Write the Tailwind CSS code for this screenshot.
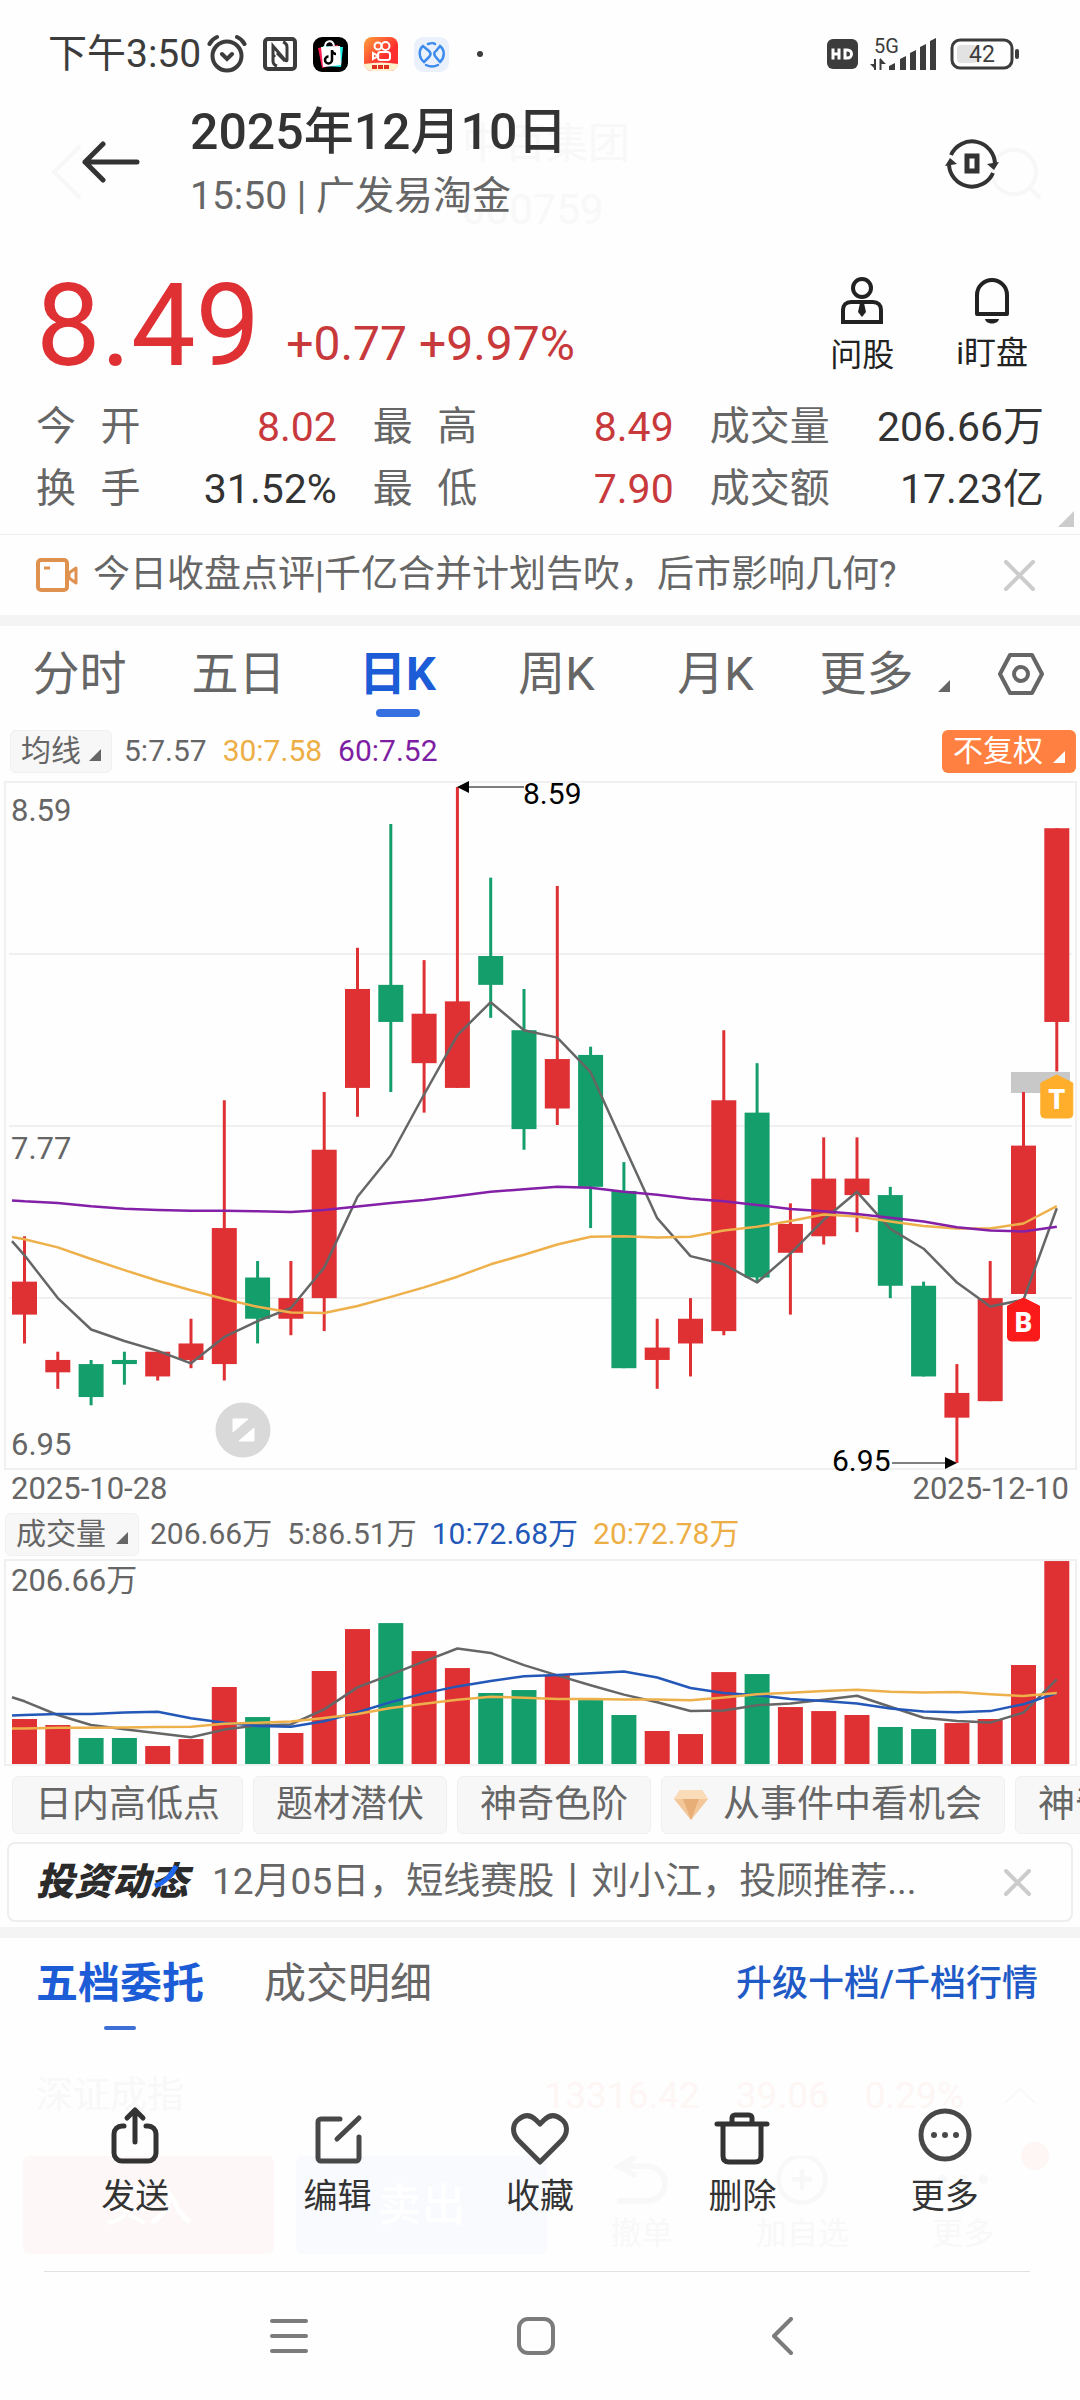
<!DOCTYPE html>
<html lang="zh-CN">

<head>
    <meta charset="UTF-8">
    <meta name="viewport" content="width=device-width, initial-scale=1">
    <title>8.49 日K</title>
    <script src="https://cdn.jsdelivr.net/npm/@tailwindcss/browser@4"></script>
</head>

<body class="bg-[#fefefe] text-[#333] font-[Roboto,'Noto_Sans_CJK_SC',sans-serif]">
    <!-- status bar -->
    <div class="flex items-center h-[108px] pl-12 pr-[60px] text-[#3c3c3c]">
        <span class="text-[39px] leading-[48px]">下午3:50</span>
        <svg class="w-10 h-10 ml-[6px]" viewBox="0 0 40 40" fill="none" stroke="currentColor" stroke-width="4" stroke-linecap="round">
            <circle cx="20" cy="22" r="14.5" />
            <path d="M2.500 10C4 7 6.500 4.500 10 3M37.500 10C36 7 33.500 4.500 30 3M15 20l5 5 5-5" />
        </svg>
        <svg class="w-[34px] h-[34px] ml-4" viewBox="0 0 34 34" fill="none" stroke="currentColor">
            <rect x="2" y="2" width="30" height="30" rx="3" stroke-width="4" />
            <path d="M14 29c-3-1-4-2-4-5V9l12 14c1 1 2 1 2 0V10M20 5c3 1 4 2 4 5M12 20l-2-2M14 16l8 8" stroke-width="3" />
        </svg>
        <svg class="w-[35px] h-[35px] ml-4" viewBox="0 0 35 35">
            <rect width="35" height="35" rx="9" fill="#000" />
            <path d="M5 11l20-3 4 18-20 5z" fill="#ff1a50" />
            <path d="M10 9l20 1-2 20-18-1z" fill="#19f0e6" />
            <path d="M8 10l19-1 1 19-18 2z" fill="#fff" />
            <path d="M12 10c0-7 8-8 9-1" fill="none" stroke="#fff" stroke-width="2" />
            <path d="M19 13v10a3.500 3.500 0 1 1-3.500-3.500M19 14c1 2 2 3 4 3" fill="none" stroke="#000" stroke-width="2.500" />
        </svg>
        <svg class="w-[34px] h-[34px] ml-4" viewBox="0 0 34 34">
            <defs>
                <linearGradient id="ks" x1="0" y1="0" x2="1" y2="1">
                    <stop offset="0" stop-color="#ffa03a" />
                    <stop offset="0.6" stop-color="#ff2e2e" />
                </linearGradient>
            </defs>
            <rect width="34" height="34" rx="8" fill="url(#ks)" />
            <g fill="none" stroke="#fff" stroke-width="2">
                <circle cx="14" cy="9" r="3.500" />
                <circle cx="21.500" cy="9" r="4" />
                <rect x="14" y="15" width="12" height="8" rx="2.500" />
                <path d="M14 19l-5-3v6z" />
            </g>
            <path d="M0 27q17-3 34 0a8 7 0 0 1-8 7H8a8 7 0 0 1-8-7z" fill="#fff0cc" />
            <path d="M8 30h17" stroke="#e03020" stroke-width="4" stroke-dasharray="5 1" />
        </svg>
        <svg class="w-[35px] h-[35px] ml-4" viewBox="0 0 35 35">
            <rect width="35" height="35" rx="9" fill="#eaf1fb" />
            <g fill="none" stroke="#3d8bec" stroke-width="2.500" stroke-linecap="round">
                <path d="M10 25C5 21 4 13 9 9l6 5c2 2 2 4 0 6z" />
                <path d="M14 7c3-1 6-1 7 0M26 9c5 4 5 11 0 16l-5-6c-1-2-1-4 1-5z" />
                <path d="M12 28c4 2 8 2 12 0" />
            </g>
        </svg>
        <span class="w-[6px] h-[6px] ml-7 rounded-full bg-[#3c3c3c]"></span>
        <svg class="w-[31px] h-[30px] ml-auto" viewBox="0 0 31 30">
            <rect width="31" height="30" rx="6" fill="#3c3c3c" />
            <path d="M6 9.500v11M6 15h6M12 9.500v11M18 11v8h2.500a4 4 0 0 0 0-8z" fill="none" stroke="#fff" stroke-width="3" />
        </svg>
        <svg class="w-[68px] h-[36px] ml-3" viewBox="0 0 68 36">
            <text x="4" y="17" font-size="20" fill="#3c3c3c">5G</text>
            <path d="M0 28l6 6V28zM16 28l-6-6v6z" fill="#3c3c3c" />
            <path d="M5 23v11M10.500 23v11" stroke="#3c3c3c" stroke-width="2" />
            <path d="M19 34v-4l6-3v7zM30 34V23l6-3v14zM40 34V17l6-3v20zM50 34V11l6-3v26zM60 34V5l6-3v32z" fill="#3c3c3c" />
        </svg>
        <svg class="w-[70px] h-[32px] ml-3" viewBox="0 0 70 32">
            <rect x="2" y="2" width="60" height="28" rx="8" fill="none" stroke="#3c3c3c" stroke-width="3" />
            <rect x="7" y="7" width="20" height="18" rx="4" fill="#e2e2e2" />
            <rect x="65" y="11" width="4" height="10" rx="2" fill="#3c3c3c" />
            <text x="32" y="24" font-size="23" text-anchor="middle" fill="#3c3c3c">42</text>
        </svg>
    </div>

    <!-- title bar, the page behind it shows through faintly -->
    <header class="relative flex items-center h-[112px] pl-[82px] pr-[81px]">
        <div class="absolute left-[462px] top-2 text-[#f8f8f8] whitespace-nowrap" aria-hidden="true">
            <p class="text-[42px] leading-[56px]">中百集团</p>
            <p class="text-[42px] leading-[76px]">000759</p>
        </div>
        <svg class="absolute left-[50px] top-[36px] w-8 h-14" viewBox="0 0 32 56" fill="none" stroke="#f7f7f7" stroke-width="4"><path d="M30 2L4 28l26 26" /></svg>
        <svg class="absolute right-[38px] top-[38px] w-14 h-14" viewBox="0 0 56 56" fill="none" stroke="#f7f7f7" stroke-width="4"><circle cx="28" cy="26" r="22" /><path d="M44 42l10 10" /></svg>
        <button class="relative mb-1" type="button" aria-label="返回">
            <svg class="w-[58px] h-[42px]" viewBox="0 0 58 42" fill="none" stroke="#333" stroke-width="5" stroke-linecap="round" stroke-linejoin="round"><path d="M55 21H3M21 3L3 21l18 18" /></svg>
        </button>
        <div class="relative ml-[50px]">
            <h1 class="text-[50px] leading-[64px] font-medium">2025年12月10日</h1>
            <p class="text-[39px] leading-[64px] text-[#666]">15:50 | 广发易淘金</p>
        </div>
        <button class="relative ml-auto" type="button" aria-label="识别">
            <svg class="w-[54px] h-[54px]" viewBox="0 0 54 54" fill="none" stroke="#333" stroke-width="4">
                <path d="M6 18A23 23 0 0 1 50 27" />
                <path d="M48 36A23 23 0 0 1 4 27" />
                <path d="M54 25l-5 8-7-6zM0 29l5-8 7 6z" fill="#333" stroke="none" />
                <rect x="22" y="19" width="10" height="15" stroke-width="5" />
            </svg>
        </button>
    </header>

    <!-- price -->
    <section class="flex h-44 px-9">
        <div class="flex items-end h-[162px] text-[#df3034]">
            <span class="text-[115px] leading-[112px]">8.49</span>
            <span class="ml-[26px] text-[48px] leading-[76px] text-[#c8393c]">+0.77 +9.97%</span>
        </div>
        <div class="flex ml-auto pt-[54px] gap-[62px] pr-4 text-[#222]">
            <button class="flex flex-col items-center" type="button">
                <svg class="w-[52px] h-[56px]" viewBox="0 0 52 56" fill="none" stroke="currentColor" stroke-width="4">
                    <circle cx="26" cy="14" r="9" />
                    <path d="M7 48V36c0-5 3-8 8-8h22c5 0 8 3 8 8v12z" />
                    <path d="M24 29h4l2 9-4 5-4-5z" fill="currentColor" stroke="none" />
                </svg>
                <span class="text-[32px] leading-[50px]">问股</span>
            </button>
            <button class="flex flex-col items-center" type="button">
                <svg class="w-[52px] h-[52px]" viewBox="0 0 52 52" fill="none" stroke="currentColor" stroke-width="4">
                    <path d="M11 40V21a15 15 0 0 1 30 0v19z" stroke-linejoin="round" />
                    <path d="M19 45h14c-1 6-13 6-14 0z" fill="currentColor" stroke="none" />
                </svg>
                <span class="text-[32px] leading-[54px]">i盯盘</span>
            </button>
        </div>
    </section>
    <dl class="relative grid grid-cols-[9fr_9fr_10fr] gap-x-9 px-9 h-[138px] content-start text-[40px] leading-[62px] whitespace-nowrap">
        <div class="flex justify-between"><dt class="text-[#666]">今&ensp;&hairsp;开</dt><dd class="text-[41px] text-[#c8393c]">8.02</dd></div>
        <div class="flex justify-between"><dt class="text-[#666]">最&ensp;&hairsp;高</dt><dd class="text-[41px] text-[#c8393c]">8.49</dd></div>
        <div class="flex justify-between"><dt class="text-[#666]">成交量</dt><dd class="text-[41px]">206.66万</dd></div>
        <div class="flex justify-between"><dt class="text-[#666]">换&ensp;&hairsp;手</dt><dd class="text-[41px]">31.52%</dd></div>
        <div class="flex justify-between"><dt class="text-[#666]">最&ensp;&hairsp;低</dt><dd class="text-[41px] text-[#c8393c]">7.90</dd></div>
        <div class="flex justify-between"><dt class="text-[#666]">成交额</dt><dd class="text-[41px]">17.23亿</dd></div>
        <svg class="absolute right-[6px] bottom-[7px] w-4 h-4" viewBox="0 0 16 16"><path d="M16 0v16H0z" fill="#ccc" /></svg>
    </dl>

    <div class="flex items-center h-[81px] px-9 border-t border-[#eee]">
        <svg class="w-[42px] h-[34px]" viewBox="0 0 42 34" fill="none" stroke="#df9250" stroke-width="4" stroke-linejoin="round">
            <rect x="2" y="2" width="29" height="30" rx="3" />
            <path d="M33 15l7-5v15l-7-5zM8 10h6" stroke-width="3" />
        </svg>
        <a class="ml-[15px] text-[37px] leading-[48px] text-[#666]" href="#">今日收盘点评|千亿合并计划告吹，后市影响几何?</a>
        <button class="ml-auto mr-[9px]" type="button" aria-label="关闭">
            <svg class="w-[31px] h-[31px]" viewBox="0 0 31 31" stroke="#ccc" stroke-width="4" stroke-linecap="round"><path d="M2 2l27 27M29 2L2 29" /></svg>
        </button>
    </div>
    <div class="h-[11px] bg-[#f4f4f4]"></div>

    <!-- period tabs -->
    <nav class="grid grid-cols-[159fr_159fr_159fr_159fr_159fr_159fr_126fr] h-24 text-[47px] leading-[96px] text-[#666]">
        <a class="text-center" href="#">分时</a>
        <a class="text-center" href="#">五日</a>
        <a class="relative text-center font-bold text-[#1c5cd6]" href="#" aria-current="page">日K
            <span class="absolute inset-x-0 bottom-[5px] mx-auto w-11 h-2 rounded bg-[#3670e0]"></span>
        </a>
        <a class="text-center" href="#">周K</a>
        <a class="text-center" href="#">月K</a>
        <button class="flex items-center justify-center gap-6 pl-5" type="button">更多
            <svg class="w-3 h-3 mt-6" viewBox="0 0 12 12"><path d="M12 0v12H0z" fill="#666" /></svg>
        </button>
        <button class="flex items-center justify-center pl-2" type="button" aria-label="设置">
            <svg class="w-[46px] h-[42px]" viewBox="0 0 46 42" fill="none" stroke="#666" stroke-width="4" stroke-linejoin="round">
                <path d="M12 2h22l10 19-10 19H12L2 21z" />
                <circle cx="23" cy="21" r="7" />
            </svg>
        </button>
    </nav>

    <!-- price chart -->
    <div class="flex items-center h-[58px] pl-[10px] pr-1 gap-4 text-[30px] leading-[42px] text-[#666]">
        <button class="flex items-center gap-2 h-[43px] px-[10px] rounded-md border border-[#f0f0f0] bg-[#f7f7f7] -mr-1" type="button">均线
            <svg class="w-3 h-3 mt-2" viewBox="0 0 12 12"><path d="M12 0v12H0z" fill="#666" /></svg>
        </button>
        <span>5:7.57</span>
        <span class="text-[#ecae45]">30:7.58</span>
        <span class="text-[#7e1fa3]">60:7.52</span>
        <button class="flex items-center gap-[10px] h-[43px] px-[11px] rounded-md bg-[#ff8040] text-white ml-auto" type="button">不复权
            <svg class="w-3 h-3 mt-3" viewBox="0 0 12 12"><path d="M12 0v12H0z" fill="#fff" /></svg>
        </button>
    </div>
    <svg id="kline" class="block w-full" viewBox="0 0 1080 692"></svg>
    <div class="flex justify-between h-[38px] px-[11px] text-[31px] leading-[34px] text-[#666]">
        <span>2025-10-28</span>
        <span>2025-12-10</span>
    </div>

    <!-- volume chart -->
    <div class="flex items-center h-[48px] pl-[5px] gap-[15px] text-[30px] leading-[42px] text-[#666] whitespace-nowrap">
        <button class="flex items-center gap-[10px] h-[43px] px-[10px] rounded-md border border-[#f0f0f0] bg-[#f7f7f7] -mr-1" type="button">成交量
            <svg class="w-3 h-3 mt-2" viewBox="0 0 12 12"><path d="M12 0v12H0z" fill="#666" /></svg>
        </button>
        <span>206.66万</span>
        <span>5:86.51万</span>
        <span class="text-[#2458b8]">10:72.68万</span>
        <span class="text-[#ecae45]">20:72.78万</span>
    </div>
    <svg id="volume" class="block w-full" viewBox="0 0 1080 212"></svg>

    <div class="flex gap-[10px] pt-[6px] pl-3 overflow-hidden text-[37px] leading-[56px] text-[#666] whitespace-nowrap">
        <button class="shrink-0 px-[22px] rounded-md border border-[#f0f0f0] bg-[#f7f7f7]" type="button">日内高低点</button>
        <button class="shrink-0 px-[22px] rounded-md border border-[#f0f0f0] bg-[#f7f7f7]" type="button">题材潜伏</button>
        <button class="shrink-0 px-[22px] rounded-md border border-[#f0f0f0] bg-[#f7f7f7]" type="button">神奇色阶</button>
        <button class="flex shrink-0 items-center gap-[15px] pl-3 pr-[22px] rounded-md border border-[#f0f0f0] bg-[#f7f7f7]" type="button">
            <svg class="w-[34px] h-[32px]" viewBox="0 0 34 32">
                <path d="M6 1h22l6 9-17 21L0 10z" fill="#f3c79a" />
                <path d="M6 1h22l6 9H0z" fill="#fbdcb8" />
                <path d="M9 10h16l-8 21z" fill="#e8ae78" />
            </svg>从事件中看机会
        </button>
        <button class="shrink-0 px-[22px] rounded-md border border-[#f0f0f0] bg-[#f7f7f7]" type="button">神奇</button>
    </div>

    <div class="flex items-center h-20 mx-[7px] mt-2 pl-[27px] pr-10 rounded-lg border-2 border-[#eee]">
        <span class="relative text-[38px] leading-[48px] font-black italic text-[#2b2b2b]">投资动态
            <svg class="absolute right-[6px] top-[7px] w-[28px] h-[24px]" viewBox="0 0 28 24" fill="none" stroke="#2068f0" stroke-width="5"><path d="M22 1C17 10 12 17 1 21" /></svg>
        </span>
        <a class="ml-6 text-[37px] leading-[48px] text-[#666] whitespace-nowrap" href="#">12月05日，短线赛股丨刘小江，投顾推荐...</a>
        <button class="ml-auto" type="button" aria-label="关闭">
            <svg class="w-[27px] h-[27px]" viewBox="0 0 27 27" stroke="#ccc" stroke-width="4" stroke-linecap="round"><path d="M2 2l23 23M25 2L2 25" /></svg>
        </button>
    </div>
    <div class="h-[11px] mt-[5px] bg-[#f4f4f4]"></div>

    <div class="flex h-[92px] px-9 text-[42px] leading-[92px] text-[#666]">
        <a class="relative font-bold text-[#1c5cd6]" href="#" aria-current="page">五档委托
            <span class="absolute inset-x-0 bottom-0 mx-auto w-8 h-1 rounded-sm bg-[#3d6fd6]"></span>
        </a>
        <a class="ml-[60px]" href="#">成交明细</a>
        <a class="ml-auto mr-[6px] text-[36px] font-medium text-[#1f5ac6]" href="#">升级十档/千档行情</a>
    </div>

    <!-- action sheet over the faded trade bar -->
    <footer class="relative">
        <div class="absolute inset-x-0 top-[40px] text-[#f8f8f8]" aria-hidden="true">
            <div class="flex items-center h-[52px] pl-9 pr-11 text-[37px] whitespace-nowrap">
                <span>深证成指</span>
                <span class="ml-auto text-[#fdf6f5]">13316.42</span>
                <span class="ml-9 text-[#fdf6f5]">39.06</span>
                <span class="ml-9 text-[#fdf6f5]">0.29%</span>
                <svg class="w-8 h-4 ml-10" viewBox="0 0 32 16" fill="none" stroke="currentColor" stroke-width="2"><path d="M1 15L16 1l15 14" /></svg>
            </div>
            <div class="flex mt-[34px] pl-[23px] pr-5 gap-[22px] h-[98px]">
                <div class="w-[251px] pt-2 rounded-md bg-[#fdf8f7] text-[44px] leading-[84px] text-center text-white font-medium">买入</div>
                <div class="w-[251px] pt-2 rounded-md bg-[#f8fafe] text-[44px] leading-[84px] text-center text-white font-medium">卖出</div>
                <div class="relative flex flex-1 justify-around pr-6 text-[31px] leading-[40px]">
                    <span class="flex flex-col items-center">
                        <svg class="w-14 h-[62px]" viewBox="0 0 56 62" fill="none" stroke="currentColor" stroke-width="6" stroke-linecap="round"><path d="M4 48h30a18 18 0 0 0 0-37H4l15-9M4 11l15 9" /></svg>撤单</span>
                    <span class="flex flex-col items-center">
                        <svg class="w-14 h-[62px]" viewBox="0 0 56 62" fill="none" stroke="currentColor" stroke-width="5"><circle cx="28" cy="25" r="25" /><path d="M28 14v22M17 25h22" /></svg>加自选</span>
                    <span class="flex flex-col items-center">
                        <svg class="w-14 h-[62px]" viewBox="0 0 56 62" fill="currentColor"><circle cx="6" cy="25" r="5" /><circle cx="28" cy="25" r="5" /><circle cx="50" cy="25" r="5" /></svg>更多</span>
                    <span class="absolute right-[11px] -top-[14px] w-7 h-7 rounded-full bg-[#fdf6f5]"></span>
                </div>
            </div>
        </div>
        <div class="relative grid grid-cols-5 h-[241px] pt-[74px] px-[34px] text-[34px] leading-[44px] text-[#333]">
            <button class="flex flex-col items-center gap-[6px]" type="button">
                <svg class="w-[58px] h-[64px]" viewBox="0 0 58 64" fill="none" stroke="#333" stroke-width="5" stroke-linecap="round" stroke-linejoin="round">
                    <path d="M18 22h-2a8 8 0 0 0-8 8v19a8 8 0 0 0 8 8h26a8 8 0 0 0 8-8V30a8 8 0 0 0-8-8h-2M29 38V6M21 14l8-8 8 8" />
                </svg>发送
            </button>
            <button class="flex flex-col items-center gap-[6px]" type="button">
                <svg class="w-[58px] h-[64px]" viewBox="0 0 58 64" fill="none" stroke="#484848" stroke-width="5" stroke-linecap="round" stroke-linejoin="round">
                    <path d="M31 15H12a3 3 0 0 0-3 3v36a3 3 0 0 0 3 3h35a3 3 0 0 0 3-3V33M28 35l22-21" />
                </svg>编辑
            </button>
            <button class="flex flex-col items-center gap-[6px]" type="button">
                <svg class="w-[58px] h-[64px]" viewBox="0 0 58 64" fill="none" stroke="#484848" stroke-width="5" stroke-linejoin="round">
                    <path d="M29 58L7 36c-7-8-5-17 1-21 6-5 12-4 17 1l4 4 4-4c5-5 11-6 17-1 6 4 8 13 1 21z" />
                </svg>收藏
            </button>
            <button class="flex flex-col items-center gap-[6px]" type="button">
                <svg class="w-[58px] h-[64px]" viewBox="0 0 58 64" fill="none" stroke="#333" stroke-width="5" stroke-linecap="round" stroke-linejoin="round">
                    <path d="M4 20h50M10 20v32c0 4 2 6 6 6h26c4 0 6-2 6-6V20M19 20v-6a3 3 0 0 1 3-3h14a3 3 0 0 1 3 3v6" />
                </svg>删除
            </button>
            <button class="flex flex-col items-center gap-[6px]" type="button">
                <svg class="w-[58px] h-[64px]" viewBox="0 0 58 64" fill="none" stroke="#484848" stroke-width="5">
                    <circle cx="29" cy="31" r="24" />
                    <g fill="#484848" stroke="none"><circle cx="18" cy="31" r="3" /><circle cx="29" cy="31" r="3" /><circle cx="40" cy="31" r="3" /></g>
                </svg>更多
            </button>
        </div>
        <div class="relative ml-11 mr-[50px] border-t border-[#e2e2e2]"></div>
        <div class="relative flex items-center justify-around h-[128px] pl-[166px] pr-[174px]">
            <button type="button" aria-label="最近任务">
                <svg class="w-[38px] h-[38px]" viewBox="0 0 38 38" stroke="#7b7b7b" stroke-width="4" stroke-linecap="round"><path d="M2 4h34M2 19h34M2 34h34" /></svg>
            </button>
            <button type="button" aria-label="主屏幕">
                <svg class="w-[38px] h-[38px]" viewBox="0 0 38 38" fill="none" stroke="#7b7b7b" stroke-width="4"><rect x="2" y="2" width="34" height="34" rx="9" /></svg>
            </button>
            <button type="button" aria-label="返回上一级">
                <svg class="w-[38px] h-[38px]" viewBox="0 0 38 38" fill="none" stroke="#7b7b7b" stroke-width="4" stroke-linecap="round" stroke-linejoin="round"><path d="M27 2L10 19l17 17" /></svg>
            </button>
        </div>
    </footer>

    <script>
        const RED = '#df3034', GREEN = '#149e6b';
        const GREY = '#666', GOLD = '#eeb04a', PURPLE = '#8420a8', BLUE = '#2458b8';

        // open, close, high, low, volume
        const days = [
            [7.31, 7.39, 7.50, 7.24, 45.8], [7.17, 7.20, 7.22, 7.13, 39.7], [7.19, 7.11, 7.20, 7.09, 26.5],
            [7.20, 7.19, 7.22, 7.14, 26.5], [7.16, 7.22, 7.22, 7.15, 18.3], [7.20, 7.24, 7.30, 7.18, 25.4],
            [7.19, 7.52, 7.83, 7.15, 78.4], [7.40, 7.30, 7.44, 7.24, 47.8], [7.30, 7.35, 7.44, 7.26, 31.6],
            [7.35, 7.71, 7.85, 7.27, 94.7], [7.86, 8.10, 8.20, 7.79, 137.4], [8.11, 8.02, 8.50, 7.85, 143.5],
            [7.92, 8.04, 8.17, 7.80, 115.0], [7.86, 8.07, 8.59, 7.86, 97.7], [8.18, 8.11, 8.37, 8.03, 72.3],
            [8.00, 7.76, 8.10, 7.71, 75.3], [7.81, 7.93, 8.35, 7.77, 90.6], [7.94, 7.62, 7.96, 7.52, 65.1],
            [7.61, 7.18, 7.68, 7.18, 49.9], [7.20, 7.23, 7.30, 7.13, 33.6], [7.24, 7.30, 7.35, 7.16, 30.5],
            [7.27, 7.83, 8.00, 7.26, 93.6], [7.80, 7.40, 7.92, 7.39, 91.6], [7.46, 7.53, 7.58, 7.31, 58.0],
            [7.50, 7.64, 7.74, 7.48, 53.9], [7.60, 7.64, 7.74, 7.51, 49.9], [7.60, 7.38, 7.62, 7.35, 37.7],
            [7.38, 7.16, 7.39, 7.16, 35.6], [7.06, 7.12, 7.19, 6.95, 41.7], [7.10, 7.35, 7.44, 7.10, 45.8],
            [7.36, 7.72, 7.85, 7.36, 100.8], [8.02, 8.49, 8.49, 7.90, 206.66],
        ];
        const ma30 = [7.493, 7.473, 7.445, 7.418, 7.392, 7.369, 7.348, 7.329, 7.315, 7.314, 7.331, 7.353, 7.376, 7.402, 7.432, 7.455,
            7.480, 7.499, 7.500, 7.497, 7.499, 7.514, 7.523, 7.537, 7.553, 7.548, 7.536, 7.525, 7.519, 7.519, 7.531, 7.573];
        const ma60 = [7.585, 7.581, 7.573, 7.567, 7.564, 7.562, 7.562, 7.561, 7.559, 7.564, 7.572, 7.581, 7.588, 7.598, 7.608, 7.614,
            7.620, 7.618, 7.608, 7.601, 7.591, 7.585, 7.576, 7.566, 7.561, 7.554, 7.545, 7.536, 7.522, 7.514, 7.512, 7.523];

        // averages of the last n days, "head" holds the ones that need older days
        const average = (values, n, head) => values.map((v, i) =>
            i < n - 1 ? head[i] : values.slice(i - n + 1, i + 1).reduce((a, b) => a + b) / n);

        const cx = i => 24.5 + i * 33.3;
        const line = (values, first, y, color) => {
            let pts = [[12, y(first)]].concat(values.map((v, i) => [cx(i), y(v)]));
            return `<polyline points="${pts.map(p => p[0].toFixed(1) + ',' + p[1].toFixed(1)).join(' ')}" fill="none" stroke="${color}" stroke-width="2.5" stroke-linejoin="round"/>`;
        };
        const badge = (x, y, letter, color) => `
            <path d="M${x} ${y}l16 8v31q0 4-4 4h-24q-4 0-4-4v-31z" fill="${color}" stroke="${color}" stroke-linejoin="round"/>
            <text x="${x}" y="${y + 34}" font-size="27" font-weight="900" text-anchor="middle" fill="#fff">${letter}</text>`;

        const py = p => 7 + (8.59 - p) * 412.2;
        let k = '<rect x="5" y="2" width="1071" height="687" fill="none" stroke="#f0f0f0" stroke-width="2"/>';
        for (let y of [174, 346, 518]) k += `<path d="M9 ${y}H1072" stroke="#f0f0f0" stroke-width="2"/>`;
        k += '<rect x="1011" y="292" width="59" height="21" fill="#c8c8c8"/>';
        days.forEach(([open, close, high, low], i) => {
            let c = close >= open ? RED : GREEN;
            let top = py(Math.max(open, close));
            k += `<path d="M${cx(i)} ${py(high)}V${py(low)}" stroke="${c}" stroke-width="3"/>
                <rect x="${cx(i) - 12.5}" y="${top}" width="25" height="${py(Math.min(open, close)) - top}" fill="${c}"/>`;
        });
        k += line(average(days.map(d => d[1]), 5, [7.454, 7.350, 7.274, 7.246]), 7.488, py, GREY);
        k += line(ma30, 7.498, py, GOLD) + line(ma60, 7.587, py, PURPLE);
        k += badge(cx(30), 518, 'B', '#fb1a1a') + badge(cx(31), 295, 'T', '#ffae2b');
        k += `<g font-size="31" fill="#666"><text x="11" y="41">8.59</text><text x="11" y="379">7.77</text><text x="11" y="675">6.95</text></g>
            <g font-size="30"><text x="523" y="24">8.59</text><text x="832" y="691">6.95</text></g>
            <path d="M460 7H524M892 683H950" stroke="#555" stroke-width="1.5"/>
            <path d="M457 7l12-6v12zM957 683l-12-6v12z"/>
            <circle cx="243" cy="650" r="27.5" fill="#d9d9d9"/>
            <path d="M233 639h15l-15 13zM254 661h-15l15-13z" fill="#fff" stroke="#fff" stroke-width="1"/>`;
        document.getElementById('kline').innerHTML = k;

        const vols = days.map(d => d[4]);
        const vy = v => 206 - v * 0.982;
        let s = '<rect x="5" y="2" width="1071" height="205" fill="none" stroke="#f0f0f0" stroke-width="2"/>';
        days.forEach((d, i) => {
            s += `<rect x="${cx(i) - 12.5}" y="${vy(d[4])}" width="25" height="${206 - vy(d[4])}" fill="${d[1] >= d[0] ? RED : GREEN}"/>`;
        });
        s += line(average(vols, 5, [63.8, 49.9, 39.7, 35.3]), 68, vy, GREY);
        s += line(average(vols, 10, [49.9, 50.9, 50.9, 52.3, 53.3, 46.5, 42, 38.7, 38]), 49.5, vy, BLUE);
        s += line(average(vols, 20, [36.3, 37, 37, 37.3, 37.6, 38, 41, 42, 43.4, 46.8, 50.9, 57, 61.4, 65.5, 68.5, 67.5, 66.2, 66.2, 65.8]), 36.3, vy, GOLD);
        s += '<text x="11" y="33" font-size="31" fill="#666">206.66万</text>';
        document.getElementById('volume').innerHTML = s;
    </script>
</body>

</html>
